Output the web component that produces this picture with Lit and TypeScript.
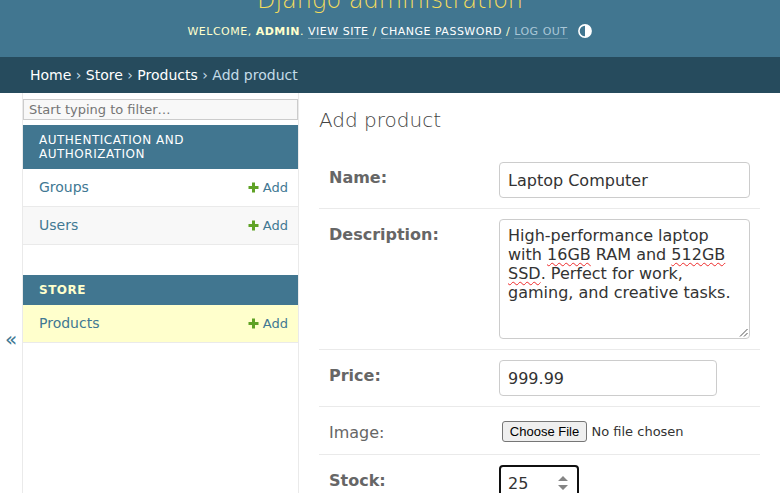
import { LitElement, html, css } from "lit";
import { customElement } from "lit/decorators.js";

const plus = html`<svg class="plus" width="11" height="11" viewBox="0 0 11 11">
  <path d="M4 0.5h3V4h3.5v3H7v3.5H4V7H0.5V4H4z" fill="#5fa225" />
</svg>`;

@customElement("app-root")
export class AppRoot extends LitElement {
  static styles = css`
    :host {
      display: flex;
      flex-direction: column;
      height: 493px;
      overflow: hidden;
      background: #fff;
      color: #333;
      font: 14px "DejaVu Sans", sans-serif;
    }
    * { box-sizing: border-box; }
    header {
      flex: none;
      height: 57px;
      background: #417690;
      color: #ffc;
      display: flex;
      flex-direction: column;
      align-items: center;
      justify-content: flex-end;
      overflow: hidden;
    }
    .brand {
      flex: none;
      font-size: 24px;
      line-height: 28px;
      font-weight: 200;
      color: #f5dd5d;
      white-space: nowrap;
      margin-bottom: 11px;
    }
    .tools {
      flex: none;
      display: flex;
      align-items: flex-start;
      height: 15px;
      margin: 0 0.5px 17px 0;
      font-size: 11px;
      line-height: 13px;
      letter-spacing: 0.5px;
      text-transform: uppercase;
      white-space: pre;
    }
    .tools a { color: #fff; border-bottom: 1px solid rgba(255, 255, 255, 0.25); }
    .tools .out { color: #c4dce8; opacity: 0.8; }
    .theme { margin: -1px 0 0 10.5px; display: block; }
    .crumbs {
      flex: none;
      height: 36px;
      padding-left: 30px;
      line-height: 36px;
      background: #264b5d;
      color: #c4dce8;
      white-space: pre;
    }
    .crumbs a { color: #fff; }
    .main { flex: 1; display: flex; min-height: 0; }
    .toggle {
      flex: none;
      width: 23px;
      border-right: 1px solid #eaeaea;
      color: #417893;
      font-size: 20px;
      line-height: 24px;
      padding-top: 234px;
      text-align: center;
    }
    nav { flex: none; width: 276px; padding-top: 6px; border-right: 1px solid #eaeaea; }
    .filter {
      height: 21px;
      border: 1px solid #ccc;
      background: #f8f8f8;
      color: #757575;
      font-size: 13px;
      line-height: 19px;
      padding-left: 5px;
      margin-bottom: 5px;
    }
    .group { margin-bottom: 30px; }
    .caption {
      background: #417690;
      color: #fff;
      padding: 8px 16px;
      font-size: 12px;
      line-height: 14px;
      letter-spacing: 0.5px;
      text-transform: uppercase;
    }
    .caption.current { color: #ffc; font-weight: 700; }
    .model {
      height: 38px;
      padding: 0 10px 0 16px;
      display: flex;
      align-items: center;
      justify-content: space-between;
      border-bottom: 1px solid #eaeaea;
      color: #417893;
      line-height: 17px;
    }
    .model.alt { background: #f8f8f8; }
    .model.current { background: #ffc; }
    .add { display: flex; align-items: center; gap: 4px; font-size: 13px; }
    .plus { display: block; }
    .content { flex: 1; padding: 15px 20px 0; }
    h1 {
      margin: 0;
      height: 44px;
      font-size: 20px;
      line-height: 24px;
      font-weight: 200;
      color: #444;
    }
    .row {
      display: flex;
      align-items: flex-start;
      padding: 10px;
      border-bottom: 1px solid #eaeaea;
      font-size: 16px;
    }
    .label {
      flex: none;
      width: 170px;
      padding-top: 6px;
      line-height: 19px;
      font-weight: 700;
      color: #666;
    }
    .label.optional { font-weight: 400; }
    .field {
      height: 36px;
      flex: none;
      border: 1px solid #ccc;
      border-radius: 4px;
      padding: 0 8px;
      line-height: 35px;
    }
    .name { width: 251px; }
    .price { width: 218px; }
    .area {
      width: 251px;
      height: 120px;
      line-height: 19px;
      padding-top: 6px;
      position: relative;
      white-space: nowrap;
    }
    .typo {
      text-decoration: underline wavy #ee2a2a 1px;
      text-decoration-skip-ink: none;
      text-underline-offset: 2px;
    }
    .grip { position: absolute; right: 0; bottom: 0; }
    .upload { height: 27px; display: flex; align-items: center; padding: 1px 0 0 3px; gap: 4.5px; font-size: 13px; }
    .choose {
      width: 85px;
      height: 21px;
      border: 1px solid #767676;
      border-radius: 3px;
      background: #efefef;
      color: #000;
      text-align: center;
      white-space: nowrap;
      font: 13px/19px "Liberation Sans", sans-serif;
    }
    .stock {
      width: 80px;
      border: 2px solid #101010;
      display: flex;
      justify-content: space-between;
      align-items: center;
      padding-right: 9.5px;
      padding-left: 7px;
    }
  `;

  private model(name: string, kind = "") {
    return html`<div class="model ${kind}"><a>${name}</a><a class="add">${plus}Add</a></div>`;
  }

  render() {
    return html`
      <header>
        <div class="brand">Django administration</div>
        <div class="tools"><span>Welcome, <b>admin</b>. </span><a>View site</a><span> / </span><a>Change password</a><span> / </span><a class="out">Log out</a><svg class="theme" width="14" height="14" viewBox="0 0 14 14"><circle cx="7" cy="7" r="6.1" fill="none" stroke="#fff" stroke-width="1.6" /><path d="M7 1a6 6 0 0 1 0 12z" fill="#fff" /></svg></div>
      </header>
      <div class="crumbs"><a>Home</a> › <a>Store</a> › <a>Products</a> › Add product</div>
      <div class="main">
        <div class="toggle">«</div>
        <nav>
          <div class="filter">Start typing to filter…</div>
          <div class="group">
            <div class="caption">Authentication and Authorization</div>
            ${this.model("Groups")} ${this.model("Users", "alt")}
          </div>
          <div class="group">
            <div class="caption current">Store</div>
            ${this.model("Products", "current")}
          </div>
        </nav>
        <div class="content">
          <h1>Add product</h1>
          <div class="row"><div class="label">Name:</div><div class="field name">Laptop Computer</div></div>
          <div class="row">
            <div class="label">Description:</div>
            <div class="field area">High-performance laptop<br />with <span class="typo">16GB</span> RAM and <span class="typo">512GB</span><br /><span class="typo">SSD</span>. Perfect for work,<br />gaming, and creative tasks.
              <svg class="grip" width="11" height="11" viewBox="0 0 11 11"><path d="M2 9.5L9.5 2M6 9.5L9.5 6" stroke="#555" stroke-width="1" /></svg>
            </div>
          </div>
          <div class="row"><div class="label">Price:</div><div class="field price">999.99</div></div>
          <div class="row">
            <div class="label optional">Image:</div>
            <div class="upload"><span class="choose">Choose File</span><span>No file chosen</span></div>
          </div>
          <div class="row">
            <div class="label">Stock:</div>
            <div class="field stock"><span>25</span><svg width="10" height="14" viewBox="0 0 10 14"><path d="M0 5L5 0L10 5zM0 9H10L5 14z" fill="#858585" /></svg></div>
          </div>
        </div>
      </div>
    `;
  }
}
